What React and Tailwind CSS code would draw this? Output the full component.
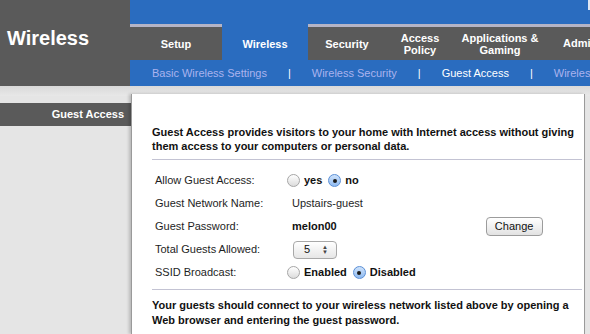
const Radio = ({ checked }) => (
  <span
    className={`inline-flex items-center justify-center w-[13px] h-[13px] rounded-full border ${
      checked
        ? 'border-[#5b8fd6] bg-gradient-to-b from-[#cfe3fb] to-[#8fbaf0]'
        : 'border-[#a6a6a6] bg-gradient-to-b from-[#ffffff] to-[#dcdcdc]'
    }`}
  >
    {checked && <span className="w-[4px] h-[4px] rounded-full bg-[#1a1a1a]" />}
  </span>
);

const tabs = [
  { label: 'Setup', w: 'w-[92px]' },
  { label: 'Wireless', w: 'w-[86px]', active: true },
  { label: 'Security', w: 'w-[78px]' },
  { label: ['Access', 'Policy'], w: 'w-[68px]' },
  { label: ['Applications &', 'Gaming'], w: 'w-[92px]' },
];

const Row = ({ label, children }) => (
  <div className="flex items-center h-[23px]">
    <div className="w-[135px] pl-[3px] text-[11px] text-[#1e1e1e]">{label}</div>
    <div className="flex-1 flex items-center">{children}</div>
  </div>
);

export default function App() {
  return (
    <div className="w-[590px] h-[334px] overflow-hidden bg-[#e5e5e5] font-['Liberation_Sans',Arial,sans-serif] flex flex-col">
      <div className="flex h-[86px] shrink-0">
        <div className="w-[130px] shrink-0 bg-[#5a5a5a] pl-[7px] pt-[28px]">
          <h1 className="text-[20px] font-bold text-white leading-none">Wireless</h1>
        </div>
        <div className="flex-1 min-w-0 flex flex-col">
          <div className="h-[24px] bg-[#2a6cbf] relative">
            <span className="absolute right-0 top-0 w-[2px] h-[10px] bg-[#dfe6f3]" />
          </div>
          <div className="h-[36px] flex">
            {tabs.map((t, i) => (
              <div
                key={i}
                className={`${t.w} shrink-0 flex items-center justify-center text-center text-[11px] font-bold text-white leading-[12px] ${
                  t.active ? 'bg-[#2a6cbf]' : 'bg-[#5a5a5a] border-t-[3px] border-[#b4b4c6]'
                }`}
              >
                {Array.isArray(t.label) ? (
                  <span>
                    {t.label[0]}
                    <br />
                    {t.label[1]}
                  </span>
                ) : (
                  <span className={t.active ? 'pt-[4px]' : ''}>{t.label}</span>
                )}
              </div>
            ))}
            <div className="flex-1 min-w-0 bg-[#5a5a5a] border-t-[3px] border-[#b4b4c6] flex items-center pl-[17px] text-[11px] font-bold text-white whitespace-nowrap overflow-hidden">
              Admin
            </div>
          </div>
          <div className="h-[26px] bg-[#2a6cbf] flex items-center pl-[22px] gap-[21px] text-[11px] text-[#aab3ee] whitespace-nowrap overflow-hidden">
            <span>Basic Wireless Settings</span>
            <span className="text-white">|</span>
            <span>Wireless Security</span>
            <span className="text-white">|</span>
            <span className="text-white">Guest Access</span>
            <span className="text-white">|</span>
            <span>Wireles</span>
          </div>
        </div>
      </div>

      <div className="flex flex-1 min-h-0 pt-[8px] bg-gradient-to-b from-[#d9d9d9] to-[#e8e8e8] bg-no-repeat bg-[length:100%_10px]">
        <div className="w-[131px] shrink-0 pt-[9px]">
          <div className="h-[23px] bg-[#5a5a5a] flex items-center justify-end pr-[7px] text-[11px] font-bold text-white">
            Guest Access
          </div>
        </div>
        <div className="w-[454px] shrink-0 bg-white border-l border-r border-[#9a9a9a] shadow-[-2px_0_3px_rgba(0,0,0,0.2)] pl-[20px] pr-[2px] pt-[31px]">
          <p className="text-[11px] font-bold text-[#111] leading-[14px]">
            Guest Access provides visitors to your home with Internet access without giving them access to your computers or personal data.
          </p>
          <div className="mt-[6px] h-px bg-[#c3c3d3]" />
          <div className="pt-[9px]">
            <Row label="Allow Guest Access:">
              <Radio />
              <span className="ml-[4px] text-[11px] font-bold text-[#111]">yes</span>
              <span className="ml-[6px] flex">
                <Radio checked />
              </span>
              <span className="ml-[4px] text-[11px] font-bold text-[#111]">no</span>
            </Row>
            <Row label="Guest Network Name:">
              <span className="ml-[5px] text-[11px] text-[#1e1e1e]">Upstairs-guest</span>
            </Row>
            <Row label="Guest Password:">
              <span className="ml-[5px] text-[11px] font-bold text-[#111]">melon00</span>
              <button className="ml-[149px] h-[19px] w-[57px] rounded-[4px] border border-[#9c9c9c] bg-gradient-to-b from-[#ffffff] to-[#e2e2e2] text-[11px] text-[#111] leading-none">
                Change
              </button>
            </Row>
            <Row label="Total Guests Allowed:">
              <span className="ml-[6px] w-[44px] h-[18px] rounded-[4px] border border-[#a8a8a8] bg-gradient-to-b from-[#ffffff] to-[#e6e6e6] flex items-center justify-between pl-[10px] pr-[8px] text-[11px] text-[#111]">
                5
                <span className="flex flex-col text-[6px] leading-[5px] text-[#444]">
                  <span>▲</span>
                  <span>▼</span>
                </span>
              </span>
            </Row>
            <Row label="SSID Broadcast:">
              <Radio />
              <span className="ml-[4px] text-[11px] font-bold text-[#111]">Enabled</span>
              <span className="ml-[6px] flex">
                <Radio checked />
              </span>
              <span className="ml-[4px] text-[11px] font-bold text-[#111]">Disabled</span>
            </Row>
          </div>
          <div className="mt-[5px] h-px bg-[#c3c3d3]" />
          <p className="mt-[8px] text-[11px] font-bold text-[#111] leading-[15px]">
            Your guests should connect to your wireless network listed above by opening a Web browser and entering the guest password.
          </p>
        </div>
      </div>
    </div>
  );
}
